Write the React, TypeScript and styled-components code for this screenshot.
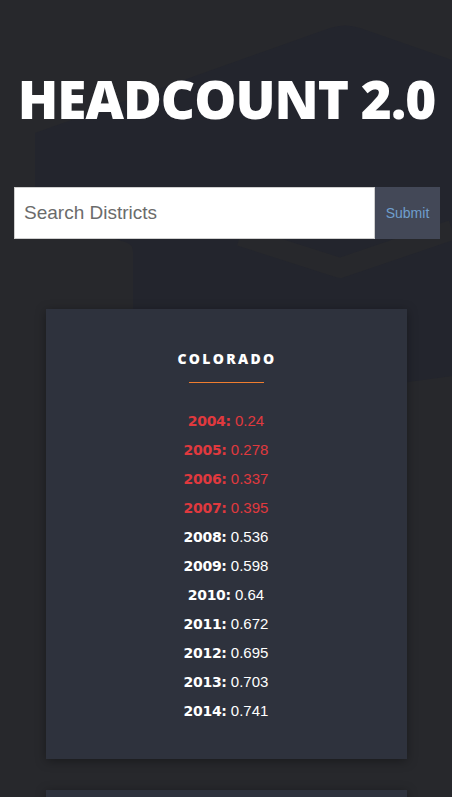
import React from "react";
import styled, { createGlobalStyle } from "styled-components";

const Global = createGlobalStyle`
  html, body { margin: 0; padding: 0; background: #27282c; }
  body { font-family: "Liberation Sans", Arial, sans-serif; overflow: hidden; }
  * { box-sizing: border-box; }
`;

const Page = styled.div`
  position: relative;
  width: 452px;
  height: 797px;
  overflow: hidden;
  background: #27282c;
`;

const Backdrop = styled.svg`
  position: absolute;
  left: 0;
  top: 0;
  width: 452px;
  height: 797px;
  pointer-events: none;
`;

const Content = styled.div`
  position: relative;
  display: flex;
  flex-direction: column;
  align-items: center;
  padding-top: 66px;
`;

const Title = styled.h1`
  margin: 0 0 0 1px;
  font-family: "Open Sans", sans-serif;
  font-weight: 800;
  font-size: 53px;
  line-height: 66px;
  color: #ffffff;
  letter-spacing: -1px;
`;

const SearchForm = styled.form`
  display: flex;
  width: 426px;
  height: 52px;
  margin: 55px 0 0 2px;
`;

const SearchInput = styled.input`
  flex: 1;
  min-width: 0;
  height: 52px;
  border: 1px solid #cfcfcf;
  background: #ffffff;
  padding: 0 9px;
  font-family: "Liberation Sans", Arial, sans-serif;
  font-size: 19px;
  color: #333;
  outline: none;
  &::placeholder { color: #6b6b6b; }
`;

const SubmitButton = styled.button`
  width: 65px;
  height: 52px;
  border: none;
  background: #434857;
  color: #6f9fcd;
  font-family: "Liberation Sans", Arial, sans-serif;
  font-size: 14px;
  padding: 0;
`;

const Card = styled.section<{ $gap: number }>`
  flex-shrink: 0;
  width: 361px;
  margin-top: ${(p) => p.$gap}px;
  background: #2e323d;
  box-shadow: 0 2px 10px rgba(0, 0, 0, 0.35);
  display: flex;
  flex-direction: column;
  align-items: center;
  padding: 40px 0 30px;
`;

const CardTitle = styled.h2`
  margin: 0;
  font-family: "Open Sans", sans-serif;
  font-weight: 800;
  font-size: 14px;
  letter-spacing: 2.3px;
  line-height: 20px;
  color: #ffffff;
  padding-left: 2px;
`;

const Underline = styled.div`
  width: 75px;
  height: 1px;
  background: #ef7d2f;
  margin-top: 13px;
  margin-bottom: 27px;
`;

const Row = styled.p<{ $low: boolean }>`
  margin: 0;
  height: 29px;
  line-height: 22px;
  font-family: "Liberation Sans", Arial, sans-serif;
  font-size: 15px;
  color: ${(p) => (p.$low ? "#e0393e" : "#ffffff")};
`;

const Year = styled.span`
  font-family: "DejaVu Sans", sans-serif;
  font-weight: 900;
  font-size: 14px;
  letter-spacing: -0.3px;
`;

const data: [string, string][] = [
  ["2004", "0.24"],
  ["2005", "0.278"],
  ["2006", "0.337"],
  ["2007", "0.395"],
  ["2008", "0.536"],
  ["2009", "0.598"],
  ["2010", "0.64"],
  ["2011", "0.672"],
  ["2012", "0.695"],
  ["2013", "0.703"],
  ["2014", "0.741"],
];

export default function App() {
  return (
    <Page>
      <Global />
      <Backdrop viewBox="0 0 452 797">
        <path
          d="M35 133 L330 28 Q345 23 360 28 L452 60 L452 376 L133 420 L133 252 Q133 244 125 242 L35 215 Z"
          fill="#23252d"
        />
        <polyline
          points="240,236 340,268 452,230"
          fill="none"
          stroke="#27282c"
          strokeWidth="20"
          strokeLinejoin="round"
        />
      </Backdrop>
      <Content>
        <Title>HEADCOUNT 2.0</Title>
        <SearchForm onSubmit={(e) => e.preventDefault()}>
          <SearchInput placeholder="Search Districts" />
          <SubmitButton type="submit">Submit</SubmitButton>
        </SearchForm>
        <Card $gap={70}>
          <CardTitle>COLORADO</CardTitle>
          <Underline />
          {data.map(([y, v]) => (
            <Row key={y} $low={parseFloat(v) < 0.5}>
              <Year>{y}:</Year> {v}
            </Row>
          ))}
        </Card>
        <Card $gap={31} />
      </Content>
    </Page>
  );
}
